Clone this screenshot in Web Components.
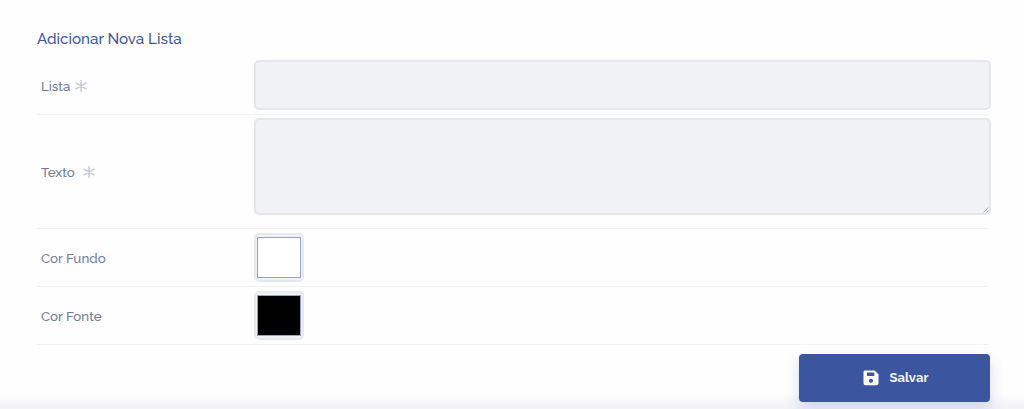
<!DOCTYPE html>
<html lang="pt-BR">
<head>
<meta charset="utf-8">
<title>Adicionar Nova Lista</title>
<style>
  html, body {
    height: 100%;
    margin: 0;
    overflow: hidden;
  }
  body {
    font-family: Raleway, Lato, "Open Sans", sans-serif;
    color: #727c9e;
    background: #fefefe;
  }
</style>
</head>
<body>
<list-form>
  <span slot="title">Adicionar Nova Lista</span>
  <form-row style="--h:55px; --top:0px" required>
    <span slot="label">Lista</span>
    <text-field style="--h:50px"></text-field>
  </form-row>
  <form-row style="--h:114px; --top:3px; --mark-gap:8px" required>
    <span slot="label">Texto</span>
    <text-field style="--h:97px" multiline></text-field>
  </form-row>
  <form-row style="--h:58px; --bottom:3px">
    <span slot="label">Cor Fundo</span>
    <color-field value="#ffffff"></color-field>
  </form-row>
  <form-row style="--h:58px; --bottom:3px">
    <span slot="label">Cor Fonte</span>
    <color-field value="#000000"></color-field>
  </form-row>
  <save-button slot="actions">Salvar</save-button>
</list-form>

<script>
(function () { 'use strict';

  function attach(el, css, html) {
    const root = el.attachShadow({ mode: 'open' });
    root.innerHTML = `<style>*{box-sizing:border-box}${css}</style>${html}`;
    return root;
  }

  class ListForm extends HTMLElement {
    constructor() {
      super();
      attach(this, `
        :host {
          display: block;
          box-sizing: border-box;
          height: 409px;
          padding: 28px 34px 0 37px;
          background: linear-gradient(#fefefe 393px, #f1f1f6 409px);
        }
        h1 {
          margin: 0;
          height: 32px;
          padding-top: 1px;
          font-size: 15.2px;
          line-height: 21px;
          font-weight: 500;
          color: #4059a0;
        }
        footer {
          display: flex;
          justify-content: flex-end;
          padding-top: 9px;
        }
      `, `
        <h1><slot name="title"></slot></h1>
        <slot></slot>
        <footer><slot name="actions"></slot></footer>
      `);
    }
  }

  // label on the left, control on the right, thin rule below
  class FormRow extends HTMLElement {
    constructor() {
      super();
      attach(this, `
        :host {
          display: flex;
          box-sizing: border-box;
          height: var(--h);
          margin-right: 1px;
          padding-top: var(--top, 4px);
          border-bottom: 1px solid #f1f2f6;
        }
        .label {
          display: flex;
          align-items: center;
          width: 217px;
          flex: none;
          padding: 0 0 var(--bottom, 2px) 4px;
          gap: var(--mark-gap, 5px);
          font-size: 13.35px;
          line-height: 18px;
          font-weight: 500;
        }
        .mark { display: none; width: 12px; height: 12px; stroke: #c4cbe0; stroke-width: 1.5; }
        :host([required]) .mark { display: block; }
        .control { flex: 1; min-width: 0; margin-right: -2px; }
      `, `
        <div class="label">
          <slot name="label"></slot>
          <svg class="mark" viewBox="0 0 12 12" fill="none" stroke-linecap="round"><path d="M6 .7v10.6M1 3.2l10 5.6M11 3.2L1 8.8"/></svg>
        </div>
        <div class="control"><slot></slot></div>
      `);
    }
  }

  class TextField extends HTMLElement {
    constructor() {
      super();
      const multi = this.hasAttribute('multiline');
      attach(this, `
        :host { display: block; position: relative; height: var(--h); }
        input, textarea {
          display: block;
          width: 100%;
          height: 100%;
          margin: 0;
          padding: 8px 12px;
          border: 2px solid #e3e6ee;
          border-radius: 5px;
          background: #f0f2f6;
          font: inherit;
          color: inherit;
          resize: none;
          outline: 0;
        }
        .grip { position: absolute; right: 2px; bottom: 2px; width: 6px; height: 6px; stroke: #abb3cd; }
      `, multi
        ? '<textarea></textarea><svg class="grip" viewBox="0 0 6 6"><path d="M.5 5.5l5-5M3.5 5.5l2-2"/></svg>'
        : '<input type="text">');
    }
  }

  class ColorField extends HTMLElement {
    constructor() {
      super();
      const root = attach(this, `
        :host {
          display: block;
          box-sizing: border-box;
          width: 50px;
          height: 49px;
          padding: 2px 1px;
          border: 2px solid #e6e9f0;
          border-radius: 5px;
          background: #f0f2f6;
        }
        .swatch { width: 44px; height: 41px; border: 1px solid #99a2c2; }
      `, '<div class="swatch"></div>');
      root.querySelector('.swatch').style.background = this.getAttribute('value');
    }
  }

  class SaveButton extends HTMLElement {
    constructor() {
      super();
      attach(this, `
        :host { display: block; }
        button {
          display: flex;
          align-items: center;
          justify-content: center;
          gap: 10px;
          width: 191px;
          height: 48px;
          margin: 0;
          padding: 0 0 0 3px;
          border: 0;
          border-radius: 4px;
          background: #3b569f;
          box-shadow: 0 6px 14px rgba(59, 86, 159, .2);
          font: 700 13px/18px Raleway, Lato, sans-serif;
          letter-spacing: .1px;
          color: #f6f7fb;
        }
        svg { width: 16px; height: 16px; fill: #fff; }
      `, `
        <button type="button">
          <svg viewBox="0 0 16 16"><path fill-rule="evenodd" d="M2.2.5h9.3L15.5 4.3v9a2 2 0 0 1-2 2h-11a2 2 0 0 1-2-2v-11a2 2 0 0 1 1.7-2zM4 2.6v3.3h7.3V2.6zM8 8.7a2.1 2.1 0 1 0 0 4.2a2.1 2.1 0 0 0 0-4.2z"/></svg>
          <slot></slot>
        </button>
      `);
    }
  }

  customElements.define('list-form', ListForm);
  customElements.define('form-row', FormRow);
  customElements.define('text-field', TextField);
  customElements.define('color-field', ColorField);
  customElements.define('save-button', SaveButton);

}());
</script>
</body>
</html>
